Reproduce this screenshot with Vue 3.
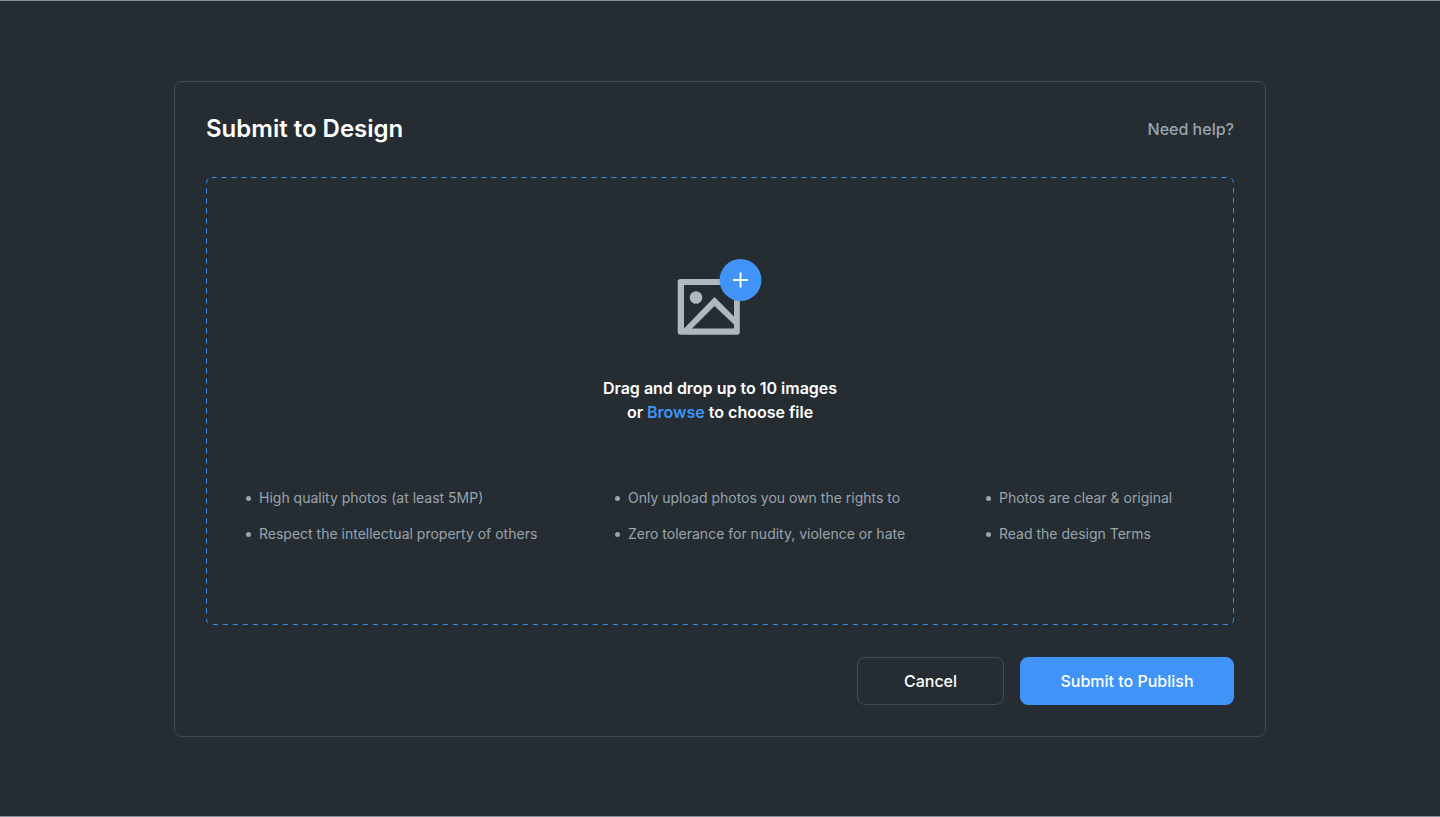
<script setup>
const guidelines = [
  ['High quality photos (at least 5MP)', 'Respect the intellectual property of others'],
  ['Only upload photos you own the rights to', 'Zero tolerance for nudity, violence or hate'],
  ['Photos are clear & original', 'Read the design Terms'],
]
</script>

<template>
  <main class="page">
    <section class="card" aria-labelledby="card-title">
      <header class="card-header">
        <h1 id="card-title" class="title">Submit to Design</h1>
        <a class="help" href="#help">Need help?</a>
      </header>

      <div class="dropzone">
        <svg class="outline" aria-hidden="true">
          <rect class="outline-rect" x="0.5" y="0.5" rx="5" />
        </svg>

        <svg class="picture" width="86" height="78" viewBox="0 0 86 78" aria-hidden="true">
          <path
            fill="#b0b8bf"
            fill-rule="evenodd"
            d="M3.500 20H60a2.800 2.800 0 0 1 2.800 2.800V73a2.800 2.800 0 0 1-2.800 2.800H3.500a2.800 2.800 0 0 1-2.800-2.800V22.800a2.800 2.800 0 0 1 2.800-2.800ZM7 26V69.500L37.500 38L57 57.500V26ZM15 69.500H57V65.500L37.500 47Z"
          />
          <circle cx="19" cy="38.500" r="6.300" fill="#b0b8bf" />
          <circle cx="63.500" cy="21" r="21" fill="#4094f7" />
          <path d="M56 21H71M63.500 13.500V28.500" stroke="#fff" stroke-width="2" />
        </svg>

        <p class="prompt">
          Drag and drop up to 10 images<br />
          or <a class="browse" href="#browse">Browse</a> to choose file
        </p>

        <div class="guidelines">
          <ul v-for="(group, i) in guidelines" :key="i" class="group">
            <li v-for="item in group" :key="item" class="item">{{ item }}</li>
          </ul>
        </div>
      </div>

      <footer class="actions">
        <button type="button" class="button cancel">Cancel</button>
        <button type="button" class="button submit">Submit to Publish</button>
      </footer>
    </section>
  </main>
</template>

<style>
body {
  background: #252c32;
}
</style>

<style scoped>
.page {
  box-sizing: border-box;
  min-height: 100vh;
  display: flex;
  align-items: center;
  justify-content: center;
  padding: 24px;
  border-top: 1px solid #84919a;
  border-bottom: 1px solid #84919a;
  background: #252c32;
  color: #fff;
  font-family: Inter, "Liberation Sans", sans-serif;
}

.card {
  box-sizing: border-box;
  width: 100%;
  max-width: 1092px;
  padding: 31px;
  border: 1px solid #434b52;
  border-radius: 8px;
}

.card-header {
  display: flex;
  align-items: center;
  justify-content: space-between;
  margin-bottom: 32px;
}

.title {
  margin: 0;
  font-size: 24px;
  font-weight: 600;
  line-height: 32px;
}

.help {
  color: #9aa4ad;
  font-size: 16px;
  font-weight: 500;
  line-height: 24px;
  text-decoration: none;
}

.dropzone {
  position: relative;
  display: flex;
  flex-direction: column;
  align-items: center;
  padding: 82px 40px 79px;
}

.outline {
  position: absolute;
  inset: 0;
  width: 100%;
  height: 100%;
}

.outline-rect {
  width: calc(100% - 1px);
  height: calc(100% - 1px);
  fill: none;
  stroke: #3490f0;
  stroke-width: 1px;
  stroke-dasharray: 5 5;
}

.picture {
  position: relative;
  margin-bottom: 39px;
}

.prompt {
  position: relative;
  margin: 0 0 62px;
  font-size: 16px;
  font-weight: 600;
  line-height: 24px;
  text-align: center;
}

.browse {
  color: #4094f7;
  text-decoration: none;
}

.guidelines {
  position: relative;
  align-self: stretch;
  display: grid;
  grid-template-columns: 369fr 371fr 208fr;
}

.group {
  display: grid;
  gap: 12px;
  margin: 0;
  padding: 0;
  list-style: none;
}

.item {
  display: flex;
  align-items: center;
  gap: 8px;
  color: #9aa4ad;
  font-size: 14px;
  line-height: 24px;
}

.item::before {
  content: "";
  width: 5px;
  height: 5px;
  margin-top: 2px;
  flex: none;
  border-radius: 50%;
  background: #9aa4ad;
}

.actions {
  display: flex;
  justify-content: flex-end;
  gap: 16px;
  margin-top: 32px;
}

.button {
  box-sizing: border-box;
  height: 48px;
  padding: 0 32px;
  border: 1px solid #434b52;
  border-radius: 8px;
  background: transparent;
  color: #fff;
  font-family: inherit;
  font-size: 16px;
  font-weight: 500;
  line-height: 24px;
  cursor: pointer;
}

.cancel {
  min-width: 147px;
}

.submit {
  min-width: 214px;
  border-color: #4094f7;
  background: #4094f7;
}
</style>
